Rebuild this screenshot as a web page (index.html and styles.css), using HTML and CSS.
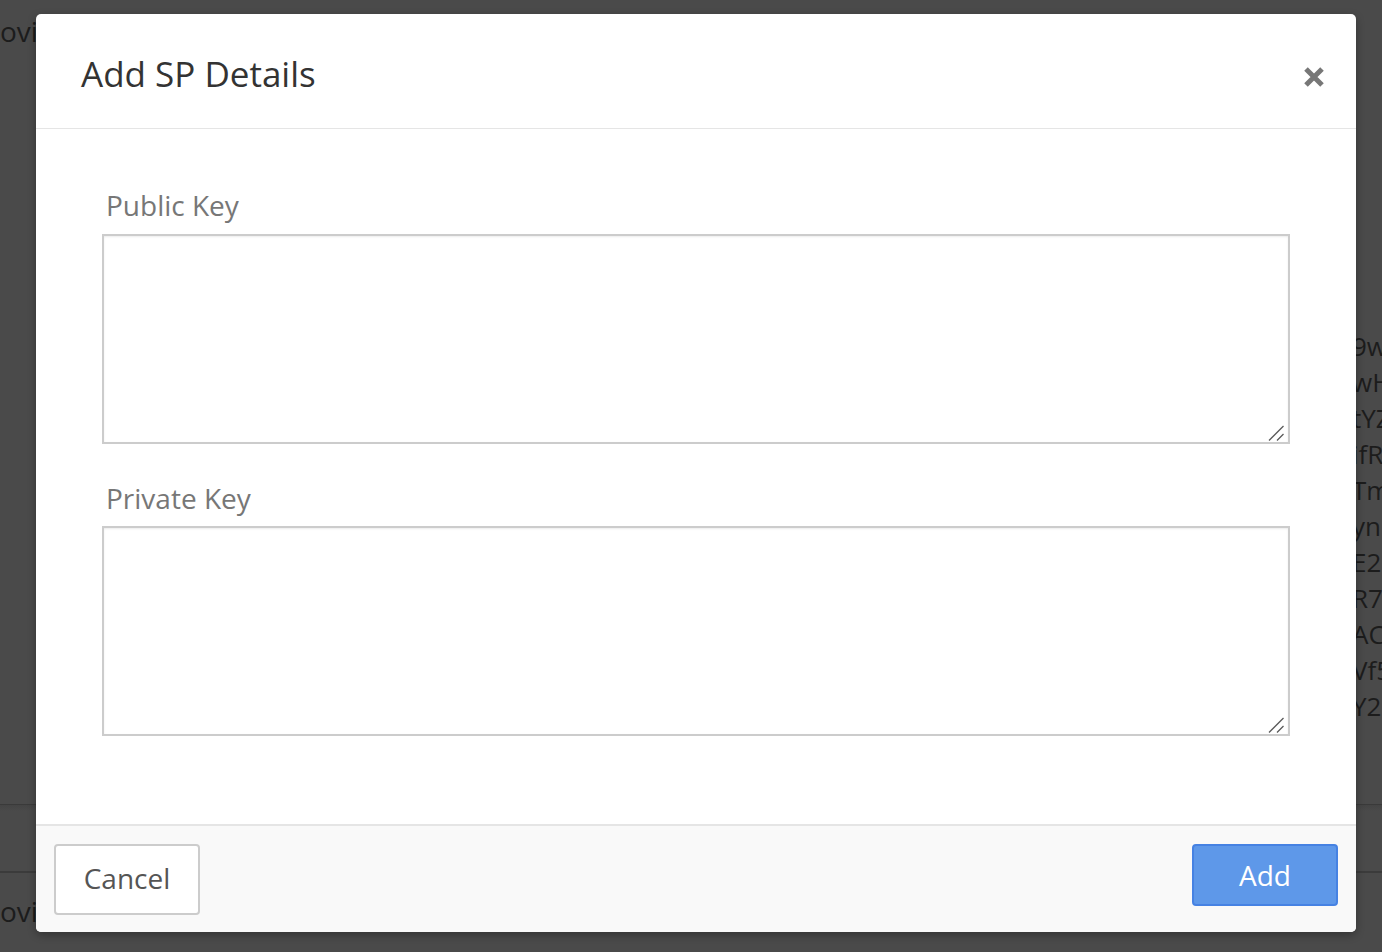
FILE: index.html
```html
<!DOCTYPE html>
<html lang="en">
<head>
<meta charset="utf-8">
<title>Add SP Details</title>
<link rel="stylesheet" href="styles.css">
</head>
<body>
<div class="page">
  <div class="page-top">ovider</div>
  <div class="key-text">
    <div>9wQk</div>
    <div>wHrT</div>
    <div>tYZp</div>
    <div>ifRs</div>
    <div>TmHq</div>
    <div>ynB8</div>
    <div>E2dK</div>
    <div>R7xV</div>
    <div>ACzP</div>
    <div>Vf5k</div>
    <div>Y28b</div>
  </div>
  <div class="page-band"></div>
  <div class="page-bottom">ovider</div>
</div>

<div class="modal">
  <div class="modal-header">
    <h1 class="modal-title">Add SP Details</h1>
    <button class="close" aria-label="Close">
      <svg width="22" height="22" viewBox="0 0 22 22"><path d="M3 3 L19 19 M19 3 L3 19" stroke="#777" stroke-width="5" stroke-linecap="butt" fill="none"/></svg>
    </button>
  </div>
  <div class="modal-body">
    <label class="field-label">Public Key</label>
    <div class="field-wrap">
      <textarea class="field"></textarea>
      <svg class="grip" width="16" height="16" viewBox="0 0 16 16"><path d="M1 15.5 L15.5 1 M9 15.5 L15.5 9" stroke="#5a5a5a" stroke-width="1.3" fill="none"/></svg>
    </div>
    <label class="field-label second">Private Key</label>
    <div class="field-wrap">
      <textarea class="field"></textarea>
      <svg class="grip" width="16" height="16" viewBox="0 0 16 16"><path d="M1 15.5 L15.5 1 M9 15.5 L15.5 9" stroke="#5a5a5a" stroke-width="1.3" fill="none"/></svg>
    </div>
  </div>
  <div class="modal-footer">
    <button class="btn btn-cancel">Cancel</button>
    <button class="btn btn-add">Add</button>
  </div>
</div>
</body>
</html>
```

FILE: styles.css
```css
* { box-sizing: border-box; }
html, body {
  margin: 0;
  padding: 0;
  width: 1382px;
  height: 952px;
  overflow: hidden;
  background: #4a4a4a;
  font-family: "Open Sans", "Noto Sans", sans-serif;
}
.page {
  position: relative;
  height: 952px;
  display: flex;
  flex-direction: column;
  color: #1c1c1c;
}
.page-top {
  font-size: 28px;
  line-height: 38px;
  margin-top: 12px;
}
.key-text {
  margin-top: 278px;
  margin-left: 1352px;
  width: 30px;
  overflow: hidden;
  font-size: 26px;
  line-height: 36px;
  white-space: nowrap;
}
.page-band {
  margin-top: 80px;
  height: 69px;
  border-top: 1px solid #3a3a3a;
  border-bottom: 2px solid #3b3b3b;
  background: linear-gradient(#444 0, #4a4a4a 6px);
}
.page-bottom {
  font-size: 28px;
  line-height: 38px;
  margin-top: 19px;
}
.modal {
  position: absolute;
  left: 36px;
  top: 14px;
  width: 1320px;
  height: 918px;
  background: #fff;
  border-radius: 5px;
  box-shadow: 0 3px 9px rgba(0,0,0,0.3);
  display: flex;
  flex-direction: column;
  overflow: hidden;
}
.modal-header {
  height: 115px;
  flex: none;
  border-bottom: 1px solid #e5e5e5;
  display: flex;
  align-items: flex-start;
  justify-content: space-between;
  padding: 0 31px 0 45px;
}
.modal-title {
  margin: 0;
  padding-top: 39px;
  font-size: 35px;
  line-height: 42px;
  font-weight: 400;
  color: #333;
}
.close {
  margin-top: 52px;
  padding: 0;
  border: 0;
  background: transparent;
  width: 22px;
  height: 22px;
  display: flex;
}
.modal-body {
  flex: 1;
  padding: 57px 66px 0 66px;
  display: flex;
  flex-direction: column;
}
.field-label {
  font-size: 28px;
  line-height: 38px;
  color: #777;
  padding-left: 4px;
  margin-bottom: 10px;
}
.field-label.second {
  margin-top: 35px;
  margin-bottom: 9px;
}
.field-wrap {
  position: relative;
  width: 1188px;
  height: 210px;
}
.field {
  display: block;
  width: 1188px;
  height: 210px;
  border: 2px solid #ccc;
  border-radius: 0;
  box-shadow: inset 0 1px 2px rgba(0,0,0,0.08);
  font-family: inherit;
  font-size: 20px;
  padding: 8px;
  margin: 0;
  resize: none;
  background: #fff;
}
.grip {
  position: absolute;
  right: 6px;
  bottom: 3px;
  pointer-events: none;
}
.modal-footer {
  height: 108px;
  flex: none;
  background: #f9f9f9;
  border-top: 2px solid #e5e5e5;
  display: flex;
  justify-content: space-between;
  align-items: flex-start;
  padding: 18px 18px 0 18px;
}
.btn {
  font-family: inherit;
  font-size: 28px;
  line-height: 38px;
  border-radius: 4px;
  padding: 0;
  cursor: pointer;
  width: 146px;
}
.btn-cancel {
  height: 71px;
  background: #fff;
  border: 2px solid #ccc;
  color: #555;
  padding-bottom: 3px;
}
.btn-add {
  height: 62px;
  background: #5e98e9;
  border: 2px solid #4682e3;
  color: #fff;
}
```
